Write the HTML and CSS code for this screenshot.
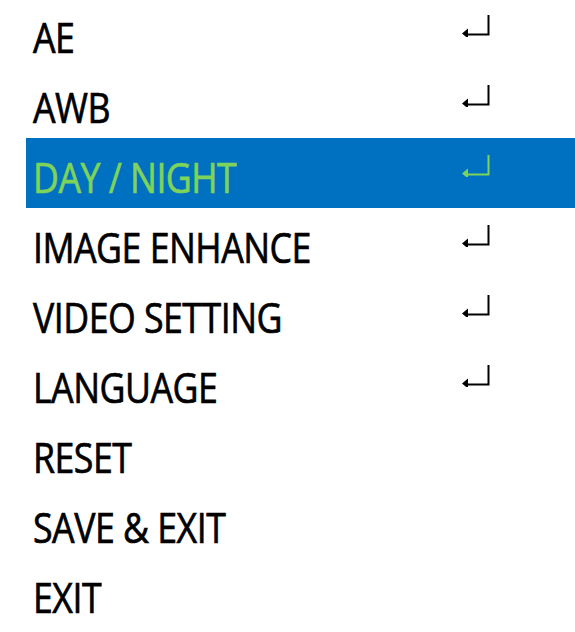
FILE: index.html
```html
<!DOCTYPE html>
<html>
<head>
<meta charset="utf-8">
<link rel="stylesheet" href="styles.css">
</head>
<body>
<div class="menu">
  <div class="row"><span class="label">AE</span><svg class="enter" viewBox="0 0 30 24" width="30" height="24"><path d="M27.5 2 V21.5 H6" /><polygon points="1,20.5 7,15.5 7,25.5"/></svg></div>
  <div class="row"><span class="label">AWB</span><svg class="enter" viewBox="0 0 30 24" width="30" height="24"><path d="M27.5 2 V21.5 H6" /><polygon points="1,20.5 7,15.5 7,25.5"/></svg></div>
  <div class="row active"><span class="label">DAY / NIGHT</span><svg class="enter" viewBox="0 0 30 24" width="30" height="24"><path d="M27.5 2 V21.5 H6" /><polygon points="1,20.5 7,15.5 7,25.5"/></svg></div>
  <div class="row"><span class="label">IMAGE ENHANCE</span><svg class="enter" viewBox="0 0 30 24" width="30" height="24"><path d="M27.5 2 V21.5 H6" /><polygon points="1,20.5 7,15.5 7,25.5"/></svg></div>
  <div class="row"><span class="label">VIDEO SETTING</span><svg class="enter" viewBox="0 0 30 24" width="30" height="24"><path d="M27.5 2 V21.5 H6" /><polygon points="1,20.5 7,15.5 7,25.5"/></svg></div>
  <div class="row"><span class="label">LANGUAGE</span><svg class="enter" viewBox="0 0 30 24" width="30" height="24"><path d="M27.5 2 V21.5 H6" /><polygon points="1,20.5 7,15.5 7,25.5"/></svg></div>
  <div class="row"><span class="label">RESET</span></div>
  <div class="row"><span class="label">SAVE &amp; EXIT</span></div>
  <div class="row"><span class="label">EXIT</span></div>
</div>
</body>
</html>
```
FILE: styles.css
```css
html, body {
  margin: 0;
  padding: 0;
  background: #ffffff;
}
body {
  width: 575px;
  height: 632px;
  overflow: hidden;
  font-family: "Open Sans", "Noto Sans", sans-serif;
}
.menu {
  margin-top: -2px;
  margin-left: 26px;
  display: flex;
  flex-direction: column;
}
.row {
  height: 70px;
  padding-left: 7px;
  display: grid;
  grid-template-columns: 428px 30px;
  align-items: start;
  color: #000;
}
.label {
  display: inline-block;
  font-size: 42px;
  font-weight: 400;
  line-height: 42px;
  margin-top: 18px;
  white-space: nowrap;
  letter-spacing: -0.6px;
  -webkit-text-stroke: 0.7px currentColor;
  transform: scaleX(0.85);
  transform-origin: left center;
}
.enter {
  margin-top: 15px;
  display: block;
}
.enter path {
  fill: none;
  stroke: #000;
  stroke-width: 2;
}
.enter polygon {
  fill: #000;
}
.row.active {
  background: #0070c0;
  color: #7ed35a;
}
.row.active .enter path {
  stroke: #7ed35a;
}
.row.active .enter polygon {
  fill: #7ed35a;
}
```
